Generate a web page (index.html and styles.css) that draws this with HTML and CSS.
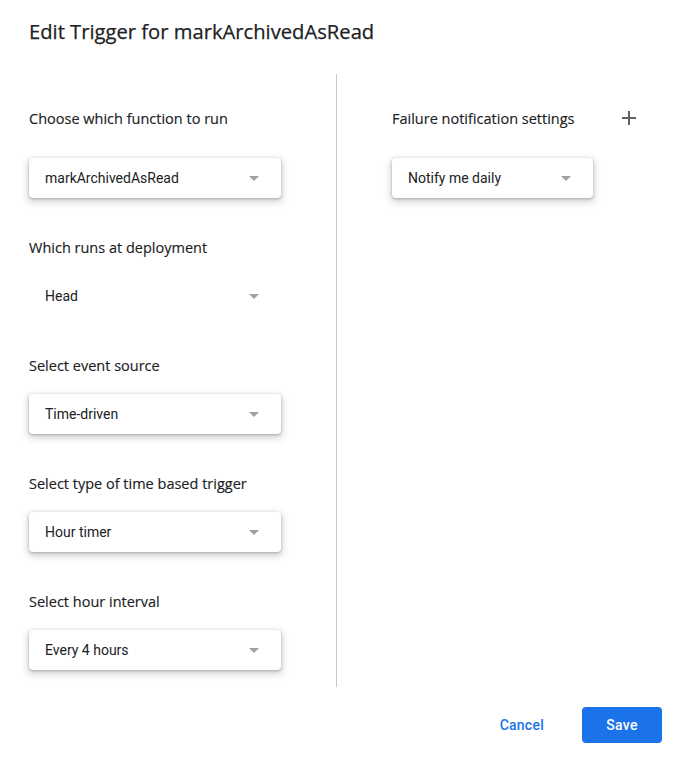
FILE: index.html
```html
<!DOCTYPE html>
<html>
<head>
<meta charset="utf-8">
<link rel="stylesheet" href="styles.css">
</head>
<body>
<div class="dialog">
  <h1 class="title">Edit Trigger for markArchivedAsRead</h1>
  <div class="main">
    <div class="col col-left">
      <div class="field first">
        <div class="label">Choose which function to run</div>
        <div class="select raised"><span>markArchivedAsRead</span><i class="arrow"></i></div>
      </div>
      <div class="field">
        <div class="label">Which runs at deployment</div>
        <div class="select flat"><span>Head</span><i class="arrow"></i></div>
      </div>
      <div class="field">
        <div class="label">Select event source</div>
        <div class="select raised"><span>Time-driven</span><i class="arrow"></i></div>
      </div>
      <div class="field">
        <div class="label">Select type of time based trigger</div>
        <div class="select raised"><span>Hour timer</span><i class="arrow"></i></div>
      </div>
      <div class="field">
        <div class="label">Select hour interval</div>
        <div class="select raised"><span>Every 4 hours</span><i class="arrow"></i></div>
      </div>
    </div>
    <div class="col col-right">
      <div class="field first">
        <div class="label-row">
          <div class="label">Failure notification settings</div>
          <svg class="plus" width="14" height="14" viewBox="0 0 14 14"><path d="M7 0v14M0 7h14" stroke="#5f6368" stroke-width="2"/></svg>
        </div>
        <div class="select raised narrow"><span>Notify me daily</span><i class="arrow"></i></div>
      </div>
    </div>
  </div>
  <div class="footer">
    <button class="btn btn-text">Cancel</button>
    <button class="btn btn-primary">Save</button>
  </div>
</div>
</body>
</html>
```
FILE: styles.css
```css
html, body {
  margin: 0;
  padding: 0;
  background: #fff;
}
.dialog {
  width: 689px;
  height: 757px;
  box-sizing: border-box;
  font-family: "Open Sans", Roboto, sans-serif;
  color: #202124;
}
.title {
  margin: 0;
  padding: 19px 0 0 29px;
  height: 74px;
  box-sizing: border-box;
  font-size: 20.2px;
  font-weight: 500;
  line-height: 24px;
  color: #202124;
  -webkit-text-stroke: 0.25px #202124;
}
.main {
  display: flex;
  height: 613px;
}
.col-left {
  width: 307px;
  padding: 33px 0 0 29px;
  border-right: 1px solid #c8c8c8;
}
.col-right {
  padding: 33px 0 0 55px;
  flex: 1;
}
.field {
  margin-bottom: 38px;
}
.label {
  font-size: 14.5px;
  line-height: 24px;
  height: 24px;
  margin-bottom: 16px;
  color: #202124;
  -webkit-text-stroke: 0.15px #202124;
}
.field.first .label {
  margin-bottom: 27px;
}
.label-row {
  display: flex;
  align-items: center;
  width: 244px;
  justify-content: space-between;
}
.label-row .label {
  margin-bottom: 27px;
}
.plus {
  margin-bottom: 29px;
}
.select {
  width: 252px;
  height: 40px;
  box-sizing: border-box;
  display: flex;
  align-items: center;
  justify-content: space-between;
  padding: 0 22px 0 16px;
  border-radius: 4px;
  font-family: Roboto, "Liberation Sans", sans-serif;
  font-size: 14px;
  color: #202124;
  background: #fff;
}
.select.narrow {
  width: 201px;
}
.raised {
  box-shadow: 0 1px 3px rgba(60,64,67,.35), 0 3px 7px 2px rgba(60,64,67,.18);
}
.arrow {
  width: 0;
  height: 0;
  border-left: 5px solid transparent;
  border-right: 5px solid transparent;
  border-top: 5px solid #a0a0a0;
}
.footer {
  display: flex;
  justify-content: flex-end;
  align-items: center;
  padding: 20px 27px 0 0;
  gap: 16px;
}
.btn {
  height: 36px;
  border: none;
  border-radius: 4px;
  font-family: Roboto, "Liberation Sans", sans-serif;
  font-size: 14px;
  font-weight: 500;
  letter-spacing: 0.25px;
  cursor: pointer;
}
.btn-text {
  background: transparent;
  color: #1a73e8;
  padding: 0 22px;
}
.btn-primary {
  background: #1a73e8;
  color: #fff;
  width: 80px;
}
```
